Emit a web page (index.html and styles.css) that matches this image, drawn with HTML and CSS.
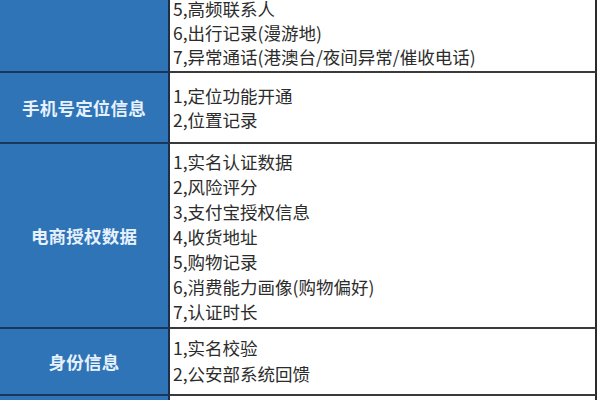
FILE: index.html
```html
<!DOCTYPE html>
<html lang="zh-CN">
<head>
<meta charset="utf-8">
<link rel="stylesheet" href="styles.css">
</head>
<body>
<div class="table">
  <div class="row r1">
    <div class="label"></div>
    <div class="content">
      <div>5,高频联系人</div>
      <div>6,出行记录(漫游地)</div>
      <div>7,异常通话(港澳台/夜间异常/催收电话)</div>
    </div>
  </div>
  <div class="row r2">
    <div class="label">手机号定位信息</div>
    <div class="content">
      <div>1,定位功能开通</div>
      <div>2,位置记录</div>
    </div>
  </div>
  <div class="row r3">
    <div class="label">电商授权数据</div>
    <div class="content">
      <div>1,实名认证数据</div>
      <div>2,风险评分</div>
      <div>3,支付宝授权信息</div>
      <div>4,收货地址</div>
      <div>5,购物记录</div>
      <div>6,消费能力画像(购物偏好)</div>
      <div>7,认证时长</div>
    </div>
  </div>
  <div class="row r4">
    <div class="label">身份信息</div>
    <div class="content">
      <div>1,实名校验</div>
      <div>2,公安部系统回馈</div>
    </div>
  </div>
  <div class="row r5">
    <div class="label"></div>
    <div class="content"></div>
  </div>
</div>
</body>
</html>
```
FILE: styles.css
```css
html, body {
  margin: 0;
  padding: 0;
  background: #ffffff;
}
body {
  width: 600px;
  height: 400px;
  overflow: hidden;
  font-family: "Noto Sans CJK SC", "Noto Sans", sans-serif;
}
.table {
  margin-top: -3px;
  width: 597px;
  display: flex;
  flex-direction: column;
}
.row {
  display: flex;
}
.label {
  width: 168px;
  flex: none;
  background: #2e74b7;
  border-right: 2px solid #1c2f47;
  border-bottom: 2px solid #17375e;
  display: flex;
  align-items: center;
  justify-content: center;
  color: #e6f1fd;
  font-weight: 700;
  font-size: 17.5px;
  letter-spacing: 0.2px;
}
.content {
  flex: 1;
  border-right: 2px solid #2a2a2a;
  border-bottom: 2px solid #3a3a3a;
  padding-left: 3px;
  color: #2c2c2c;
  font-size: 17.5px;
  line-height: 24px;
}
.r1 .content { padding-top: 0; padding-bottom: 2px; }
.r2 .content { padding-top: 11px; padding-bottom: 10px; }
.r3 .content { padding-top: 5px; padding-bottom: 3px; line-height: 25px; }
.r4 .content { padding-top: 6px; padding-bottom: 7px; line-height: 26px; }
.r5 .content, .r5 .label { height: 40px; }
```
